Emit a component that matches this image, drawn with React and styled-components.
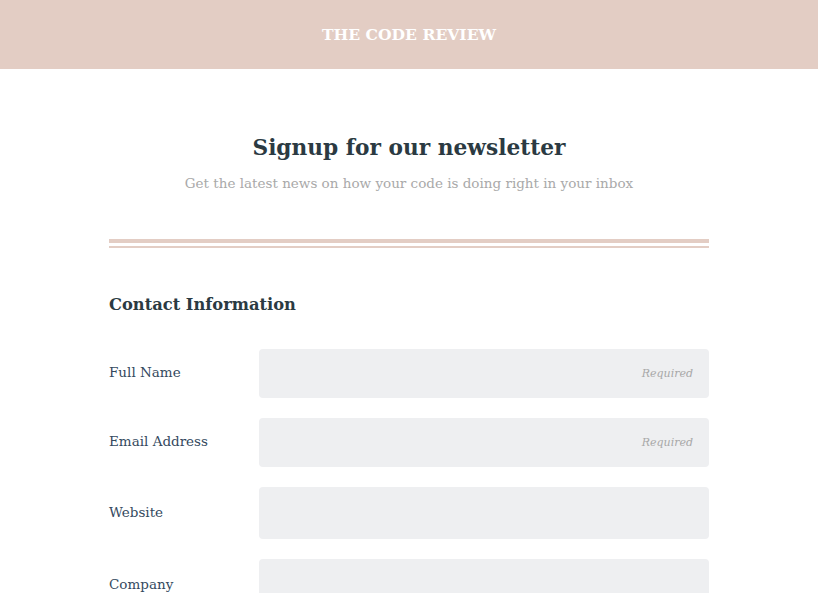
import React from 'react';
import styled, { createGlobalStyle } from 'styled-components';

const GlobalStyle = createGlobalStyle`
  body {
    margin: 0;
    background: #fff;
    font-family: "DejaVu Serif", "Liberation Serif", serif;
  }
`;

const Header = styled.header`
  height: 69px;
  background: #e3cdc4;
  display: flex;
  align-items: center;
  justify-content: center;
`;

const Brand = styled.div`
  color: #fff;
  font-weight: 700;
  font-size: 15.6px;
`;

const Container = styled.main`
  width: 600px;
  margin: 0 auto;
  padding-top: 64px;
`;

const Intro = styled.div`
  text-align: center;
  padding-bottom: 48px;
`;

const Title = styled.h1`
  margin: 0;
  font-size: 21.7px;
  line-height: 30px;
  color: #2b3a42;
  font-weight: 700;
`;

const Subtitle = styled.p`
  margin: 12px 0 0;
  font-size: 13.5px;
  color: #a9a9a9;
`;

const Divider = styled.div`
  height: 4px;
  background: #e3cdc4;
  margin-bottom: 3px;
  & + & {
    height: 2px;
  }
`;

const Section = styled.section`
  padding-top: 42px;
`;

const SectionTitle = styled.h2`
  margin: 0 0 32px;
  font-size: 16.3px;
  line-height: 24px;
  color: #2b3a42;
  font-weight: 700;
`;

const Rows = styled.div`
  display: flex;
  flex-direction: column;
  gap: 20px;
`;

const Row = styled.div`
  display: flex;
  align-items: center;
`;

const Label = styled.label`
  width: 150px;
  padding-bottom: 3px;
  font-size: 13.5px;
  color: #34495e;
`;

const Field = styled.div`
  flex: 1;
  height: ${p => p.$h}px;
  background: #eeeff1;
  border-radius: 4px;
  display: flex;
  align-items: center;
  justify-content: flex-end;
  padding-right: 16px;
`;

const Hint = styled.span`
  font-style: italic;
  font-size: 11px;
  color: #a8a8a8;
`;

const fields = [
  { label: 'Full Name', required: true, h: 49 },
  { label: 'Email Address', required: true, h: 49 },
  { label: 'Website', h: 52 },
  { label: 'Company', h: 52 },
];

export default function App() {
  return (
    <>
      <GlobalStyle />
      <Header>
        <Brand>THE CODE REVIEW</Brand>
      </Header>
      <Container>
        <Intro>
          <Title>Signup for our newsletter</Title>
          <Subtitle>Get the latest news on how your code is doing right in your inbox</Subtitle>
        </Intro>
        <Divider />
        <Divider />
        <Section>
          <SectionTitle>Contact Information</SectionTitle>
          <Rows>
            {fields.map(f => (
              <Row key={f.label}>
                <Label>{f.label}</Label>
                <Field $h={f.h}>{f.required && <Hint>Required</Hint>}</Field>
              </Row>
            ))}
          </Rows>
        </Section>
      </Container>
    </>
  );
}
